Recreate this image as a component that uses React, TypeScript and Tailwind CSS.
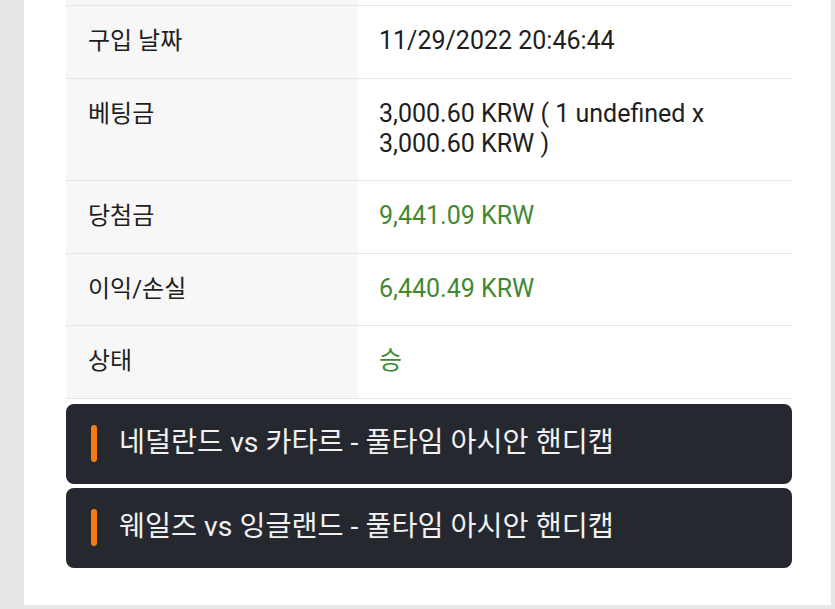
import React from 'react';

const rows: { label: string; value: string; green?: boolean }[] = [
  { label: '구입 날짜', value: '11/29/2022 20:46:44' },
  { label: '베팅금', value: '3,000.60 KRW ( 1 undefined x 3,000.60 KRW )' },
  { label: '당첨금', value: '9,441.09 KRW', green: true },
  { label: '이익/손실', value: '6,440.49 KRW', green: true },
  { label: '상태', value: '승', green: true },
];

const matches = ['네덜란드 vs 카타르 - 풀타임 아시안 핸디캡', '웨일즈 vs 잉글랜드 - 풀타임 아시안 핸디캡'];

export default function App() {
  return (
    <div
      className="w-[835px] h-[609px] overflow-hidden bg-[#e7e7e7] pl-6 pr-1 pb-1"
      style={{ fontFamily: 'Roboto, "Noto Sans CJK KR", sans-serif' }}
    >
      <div className="h-full bg-white pl-[42px] pr-[39px]">
        {/* Details table */}
        <div className="flex flex-col">
          <div className="flex h-[6px] border-b border-[#e5e5e5]">
            <div className="w-[292px] bg-[#f7f7f7]" />
            <div className="flex-1" />
          </div>
          {rows.map((r) => (
            <div key={r.label} className="flex border-b border-[#e5e5e5] leading-[30px]">
              <div className="w-[292px] shrink-0 bg-[#f7f7f7] pl-[22px] pt-5 pb-[21.5px] text-[24px] text-[#1e1e1e]">
                {r.label}
              </div>
              <div
                className={`flex-1 pl-[21px] pr-4 pt-5 pb-[21.5px] text-[25px] ${r.green ? 'text-[#3f8a32]' : 'text-[#1e1e1e]'}`}
              >
                {r.value}
              </div>
            </div>
          ))}
        </div>

        {/* Match cards */}
        <div className="mt-[5px] flex flex-col gap-1">
          {matches.map((m) => (
            <div key={m} className="flex h-[80px] items-center rounded-lg bg-[#262830] pl-[25px]">
              <div className="h-[37px] w-[6px] rounded-full bg-[#f57c12]" />
              <span className="ml-[22px] text-[28.3px] text-[#f2f2f2]">{m}</span>
            </div>
          ))}
        </div>
      </div>
    </div>
  );
}
